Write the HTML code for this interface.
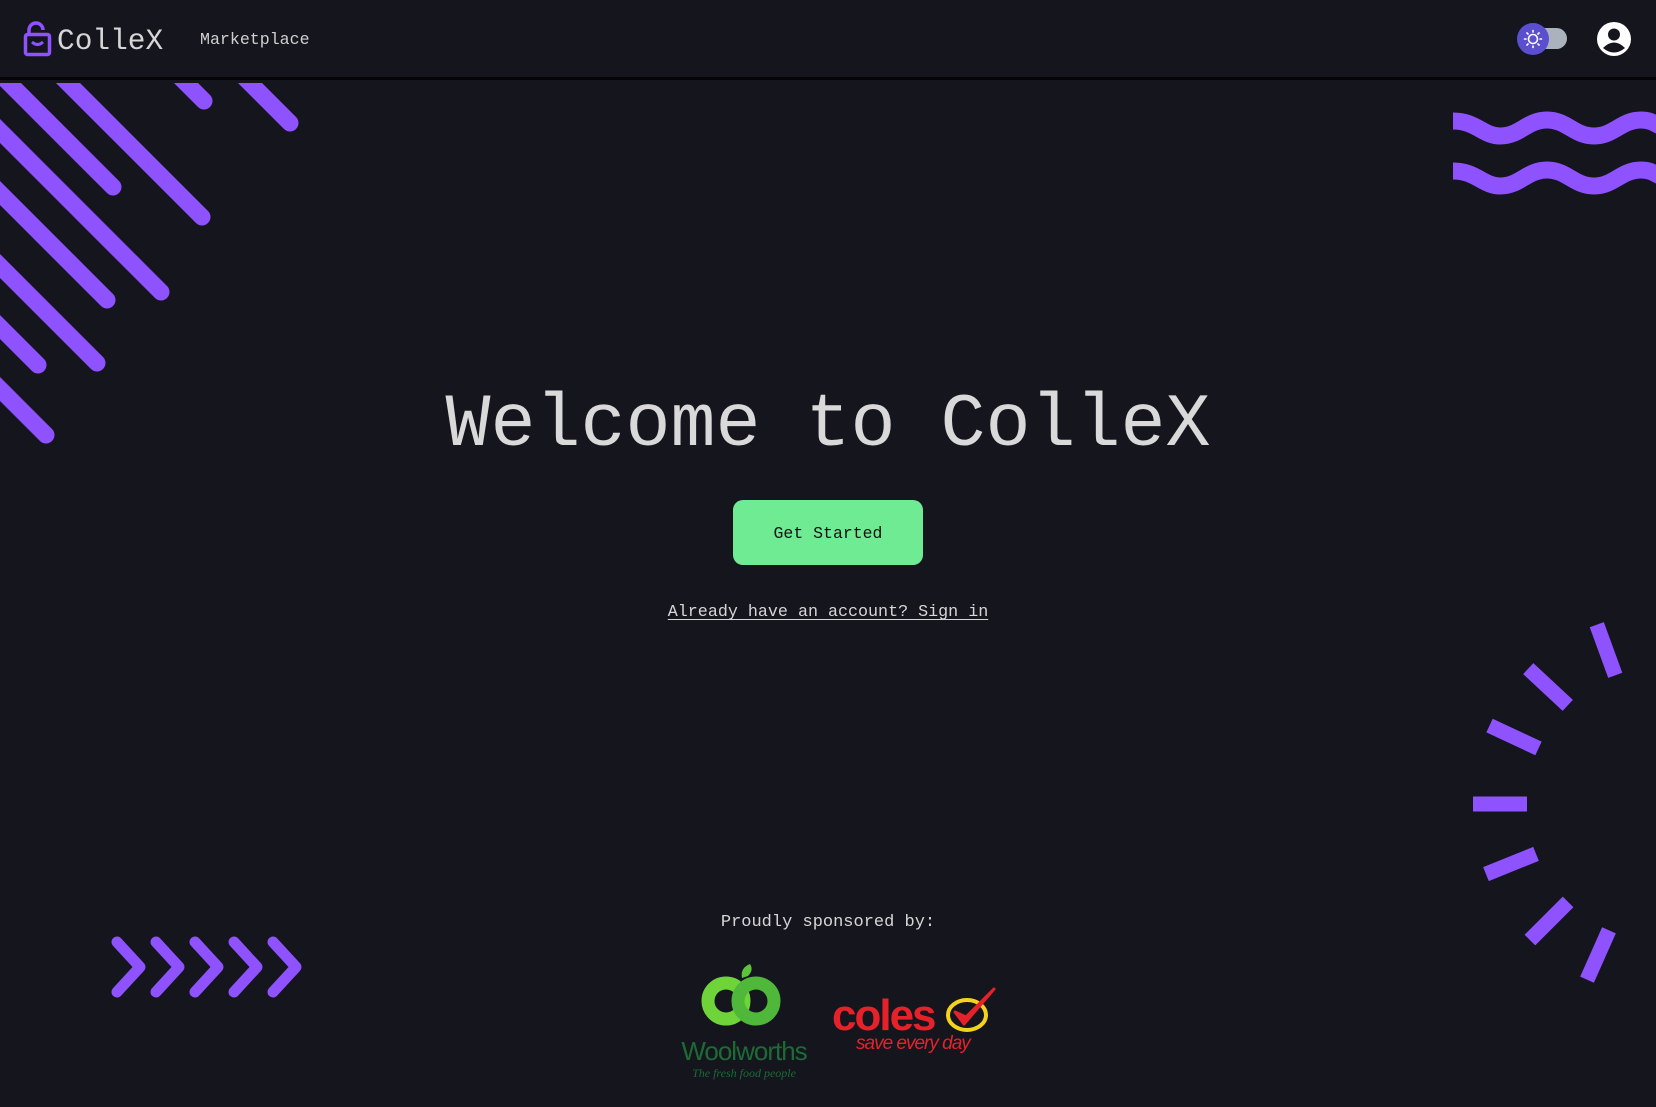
<!DOCTYPE html>
<html><head><meta charset="utf-8"><style>
*{margin:0;padding:0;box-sizing:border-box}
html,body{width:1656px;height:1107px;overflow:hidden;background:#15151e;font-family:"Liberation Mono",monospace;color:#d9d9d9}
.hdr{position:absolute;left:0;top:0;width:1656px;height:80px;background:#15151e;border-bottom:3px solid #050508}
.brand{position:absolute;left:57px;top:24px;font-size:29.5px;color:#d6d6d6}
.mk{position:absolute;left:200px;top:30px;font-size:16.6px;color:#cfcfcf}
svg.deco{position:absolute;left:0;top:0}
h1{position:absolute;left:0;width:1656px;top:388px;text-align:center;font-weight:normal;font-size:75px;color:#d9d9d9;line-height:1}
.btn{position:absolute;left:733px;top:500px;width:190px;height:65px;background:#6feb94;border-radius:10px;color:#111;font-size:16.5px;text-align:center;line-height:68px}
.lnk{position:absolute;left:0;width:1656px;top:603px;text-align:center;font-size:16.7px;color:#d6d6d6;text-decoration:underline;text-underline-offset:3px}
.sp{position:absolute;left:0;width:1656px;top:913px;text-align:center;font-size:17px;color:#d6d6d6}
</style></head><body>
<div class="hdr">
<svg style="position:absolute;left:20px;top:21px" width="34" height="38" viewBox="0 0 34 38">
<path d="M9 13 V9 a7 7 0 0 1 14 0" fill="none" stroke="#8e52ff" stroke-width="3.5"/>
<rect x="5.5" y="13.5" width="24" height="20" rx="2" fill="none" stroke="#8e52ff" stroke-width="3.5"/>
<path d="M12 21 q5.5 5 11 0" fill="none" stroke="#8e52ff" stroke-width="3"/>
</svg>
<div class="brand">ColleX</div>
<div class="mk">Marketplace</div>
<div style="position:absolute;left:1533px;top:28px;width:34px;height:21px;border-radius:11px;background:#aab3bd"></div>
<svg style="position:absolute;left:1516px;top:22px" width="34" height="34" viewBox="0 0 34 34">
<circle cx="17" cy="17" r="16" fill="#5b4fcf"/>
<circle cx="17" cy="17" r="4.5" fill="none" stroke="#fff" stroke-width="1.6"/>
<g stroke="#fff" stroke-width="1.6" stroke-linecap="round">
<path d="M17 8.5v1.5M17 24v1.5M8.5 17h1.5M24 17h1.5M11 11l1 1M22 22l1 1M11 23l1-1M22 12l1-1"/></g>
</svg>
<svg style="position:absolute;left:1596px;top:21px" width="36" height="36" viewBox="0 0 36 36">
<circle cx="18" cy="18" r="17" fill="#fff"/>
<circle cx="18" cy="13.5" r="6" fill="#15151e"/>
<path d="M7 27 q11 -11 22 0 q-11 9 -22 0z" fill="#15151e"/>
</svg>
</div>
<svg class="deco" width="1656" height="1107" viewBox="0 0 1656 1107" style="top:0">
<defs><clipPath id="c"><rect x="0" y="83" width="1656" height="1026"/></clipPath></defs>
<g clip-path="url(#c)" stroke="#8e52ff" stroke-width="17" stroke-linecap="round" fill="none">
<path d="M113 187 L-150 -76"/><path d="M202 217 L-100 -85"/><path d="M161 292 L-200 -69"/>
<path d="M107 300 L-200 -7"/><path d="M97 363 L-200 66"/><path d="M38 365 L-200 127"/>
<path d="M46 435 L-200 189"/><path d="M204 101 L100 -3"/><path d="M290 123 L180 13"/>
</g>
<g stroke="#8e52ff" stroke-width="17" fill="none">
<path d="M1453 121 C1476 121 1483 136 1500 136 C1520 136 1527 120 1547 120 C1567 120 1574 136 1594 136 C1614 136 1621 120 1641 120 C1651 120 1655 124 1660 126"/>
<path d="M1453 171 C1476 171 1483 186 1500 186 C1520 186 1527 170 1547 170 C1567 170 1574 186 1594 186 C1614 186 1621 170 1641 170 C1651 170 1655 174 1660 176"/>
</g>
<g fill="#8e52ff">
<rect x="-27" y="-7.5" width="54" height="15" transform="translate(1606 650) rotate(70)"/>
<rect x="-27" y="-7.5" width="54" height="15" transform="translate(1548 687) rotate(43)"/>
<rect x="-27" y="-7.5" width="54" height="15" transform="translate(1514 737) rotate(25)"/>
<rect x="-27" y="-7.5" width="54" height="15" transform="translate(1500 804)"/>
<rect x="-27" y="-7.5" width="54" height="15" transform="translate(1511 864) rotate(-22)"/>
<rect x="-27" y="-7.5" width="54" height="15" transform="translate(1549 921) rotate(-45)"/>
<rect x="-27" y="-7.5" width="54" height="15" transform="translate(1598 955) rotate(-66)"/>
</g>
<g stroke="#8e52ff" stroke-width="11" stroke-linecap="round" stroke-linejoin="round" fill="none">
<path d="M117 942 L140 967 L117 992"/><path d="M156 942 L179 967 L156 992"/>
<path d="M195 942 L218 967 L195 992"/><path d="M234 942 L257 967 L234 992"/>
<path d="M273 942 L296 967 L273 992"/>
</g>
<g>
<path d="M742 978 q-2 -10 8 -14 q4 6 -2 12z" fill="#5cc33a"/>
<circle cx="726" cy="1001" r="18" fill="none" stroke="#6fd43a" stroke-width="13"/>
<circle cx="756" cy="1001" r="18" fill="none" stroke="#4fb83a" stroke-width="13"/>
<text x="744" y="1060" text-anchor="middle" font-family="Liberation Sans,sans-serif" font-size="26" fill="#1c6b34" letter-spacing="-1">Woolworths</text>
<text x="744" y="1077" text-anchor="middle" font-family="Liberation Serif,serif" font-style="italic" font-size="12" fill="#1c6b34">The fresh food people</text>
</g>
<g>
<text x="832" y="1030" font-family="Liberation Sans,sans-serif" font-weight="bold" font-size="44" fill="#e5222a" letter-spacing="-2">coles</text>
<ellipse cx="967" cy="1015" rx="19" ry="15" fill="none" stroke="#f4d31c" stroke-width="4"/>
<path d="M955 1012 l9 12 l30 -35 l-28 28z" fill="#e5222a" stroke="#e5222a" stroke-width="3" stroke-linejoin="round"/>
<text x="856" y="1049" font-family="Liberation Sans,sans-serif" font-style="italic" font-size="19" fill="#e5222a" letter-spacing="-1">save every day</text>
</g>
</svg>
<h1>Welcome to ColleX</h1>
<div class="btn">Get Started</div>
<div class="lnk">Already have an account? Sign in</div>
<div class="sp">Proudly sponsored by:</div>
</body></html>
